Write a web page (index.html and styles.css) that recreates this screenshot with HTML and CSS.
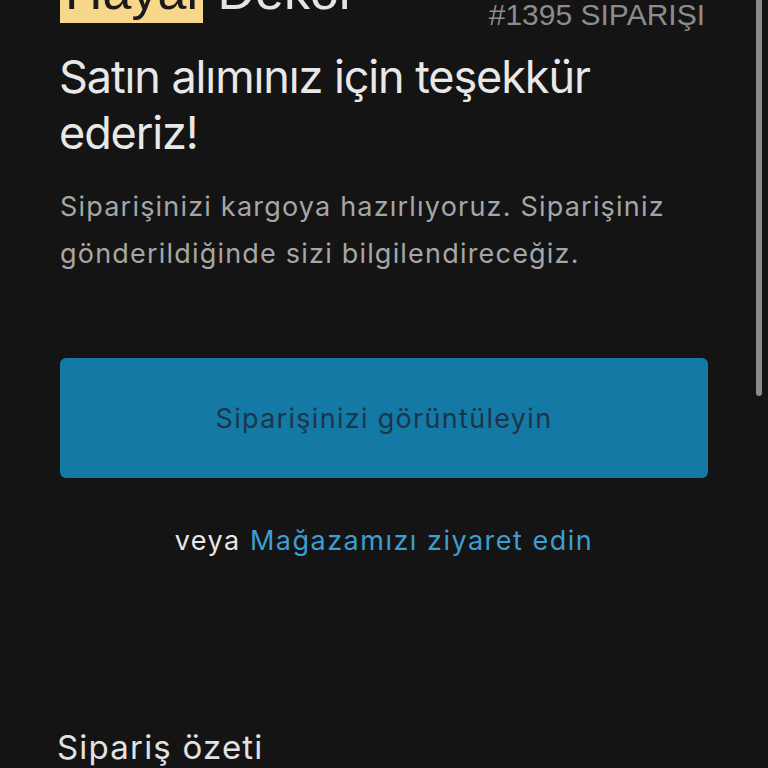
FILE: index.html
```html
<!DOCTYPE html>
<html lang="tr">
<head>
<meta charset="utf-8">
<title>Sipariş onayı</title>
<link rel="stylesheet" href="styles.css">
</head>
<body>
<div class="page">
  <header class="top">
    <div class="logo"><span class="logo-mark">Hayal</span> <span class="logo-rest">Dekor</span></div>
    <div class="order-no">#1395 SIPARIŞI</div>
  </header>
  <h1 class="title">Satın alımınız için teşekkür ederiz!</h1>
  <p class="lead">Siparişinizi kargoya hazırlıyoruz. Siparişiniz gönderildiğinde sizi bilgilendireceğiz.</p>
  <a class="btn" href="#">Siparişinizi görüntüleyin</a>
  <p class="alt">veya <a class="link" href="#">Mağazamızı ziyaret edin</a></p>
  <h2 class="summary">Sipariş özeti</h2>
</div>
<div class="scrollbar"></div>
</body>
</html>
```
FILE: styles.css
```css
html, body {
  margin: 0;
  padding: 0;
  background: #141414;
  height: 100%;
  overflow: hidden;
}
body {
  font-family: "Inter", "Roboto", sans-serif;
  color: #e6e6e6;
}
.page {
  padding: 0 60px 0 60px;
  margin-top: -39px;
}
.top {
  display: flex;
  justify-content: space-between;
  align-items: flex-start;
}
.logo {
  font-family: "Liberation Sans", Arial, sans-serif;
  font-size: 52px;
  line-height: 60px;
  color: #e4e4e4;
}
.logo-mark {
  background: #f7d88a;
  color: #1a1a1a;
  padding: 3px 5px;
}
.order-no {
  font-family: "Liberation Sans", Arial, sans-serif;
  font-size: 30px;
  color: #8c8c8c;
  margin-top: 37px;
  padding-right: 3px;
}
.title {
  margin: 17px 0 0 -1px;
  font-weight: 400;
  font-size: 45px;
  line-height: 56px;
  letter-spacing: -1.1px;
  color: #e8e8e8;
}
.lead {
  margin: 22px 0 0 0;
  font-size: 27px;
  line-height: 47px;
  letter-spacing: 1.2px;
  color: #a6a6a6;
}
.btn {
  display: flex;
  align-items: center;
  justify-content: center;
  margin-top: 81px;
  height: 120px;
  background: #1479a5;
  border-radius: 6px;
  color: #1b3549;
  font-size: 27px;
  letter-spacing: 1.3px;
  text-decoration: none;
}
.alt {
  margin: 45px 0 0 0;
  text-align: center;
  font-size: 27px;
  line-height: 36px;
  letter-spacing: 1.5px;
  color: #e8e8e8;
}
.link {
  color: #3c9ed2;
  text-decoration: none;
}
.summary {
  margin: 168px 0 0 -3px;
  font-weight: 400;
  font-size: 33px;
  letter-spacing: 1.2px;
  color: #e2e2e2;
}
.scrollbar {
  position: absolute;
  top: 0;
  right: 6px;
  width: 6px;
  height: 396px;
  background: #8a8a8a;
  border-radius: 0 0 3px 3px;
}
```
